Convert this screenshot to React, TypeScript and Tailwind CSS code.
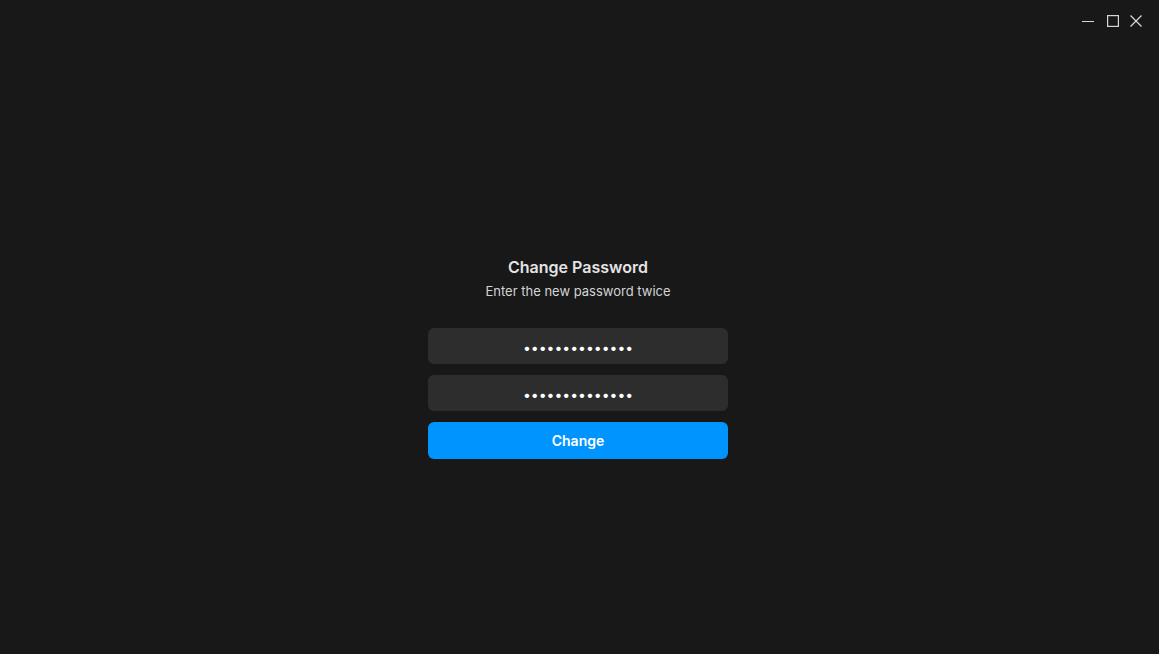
import React from "react";

export default function App() {
  return (
    <div
      className="relative w-[1159px] h-[654px] bg-[#181818] overflow-hidden"
      style={{ fontFamily: "Inter, 'Noto Sans', sans-serif" }}
    >
      <div className="absolute top-[15px] right-[17px] flex items-center text-[#d6d6d6]">
        <svg width="12" height="12" viewBox="0 0 12 12">
          <line x1="0" y1="6.5" x2="12" y2="6.5" stroke="currentColor" strokeWidth="1" />
        </svg>
        <svg width="12" height="12" viewBox="0 0 12 12" className="ml-[13px]">
          <rect x="0.6" y="0.6" width="10.8" height="10.8" fill="none" stroke="currentColor" strokeWidth="1.2" />
        </svg>
        <svg width="12" height="12" viewBox="0 0 12 12" className="ml-[11px]">
          <path d="M0.5 0.5 L11.5 11.5 M11.5 0.5 L0.5 11.5" stroke="currentColor" strokeWidth="1.3" />
        </svg>
      </div>

      <div className="flex flex-col items-center pt-[256px] pr-[3px]">
        <div className="text-[16px] font-semibold text-[#e4e4e4] leading-[22px]">Change Password</div>
        <div className="text-[13px] text-[#d4d4d4] leading-[18px] mt-[4px]">Enter the new password twice</div>
        <div className="w-[300px] flex flex-col gap-[11px] mt-[28px]">
          <input
            type="password"
            readOnly
            value="abcdefghijklmn"
            className="h-[36px] w-full rounded-[6px] bg-[#2d2d2d] text-center text-[14px] text-white outline-none border-0 pt-[3px]"
          />
          <input
            type="password"
            readOnly
            value="abcdefghijklmn"
            className="h-[36px] w-full rounded-[6px] bg-[#2d2d2d] text-center text-[14px] text-white outline-none border-0 pt-[3px]"
          />
          <button className="h-[37px] w-full rounded-[6px] bg-[#0094ff] text-white text-[14px] font-semibold">
            Change
          </button>
        </div>
      </div>
    </div>
  );
}
